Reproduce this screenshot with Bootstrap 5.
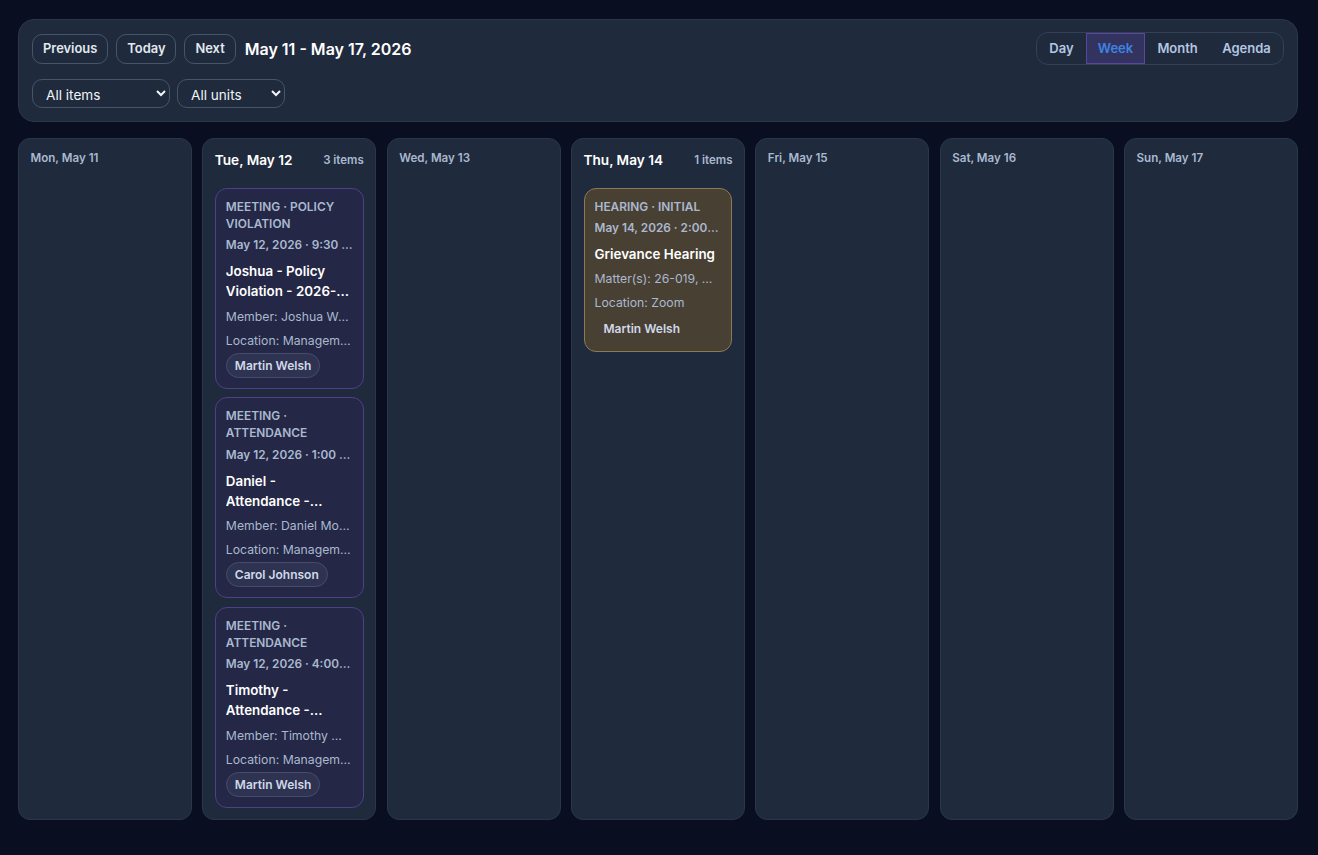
<!DOCTYPE html>
<html lang="en">
<head>
  <meta charset="UTF-8" />
  <meta name="viewport" content="width=device-width, initial-scale=1.0"/>
  <title>Calendar</title>
  <link href="https://cdn.jsdelivr.net/npm/bootstrap@5.3.3/dist/css/bootstrap.min.css" rel="stylesheet" />
  <style>
    html, body { height: 100%; }
    body {
      background: #090f20;
      font-family: Inter, "Liberation Sans", sans-serif;
      color: #e2e8f0;
    }
    .cal-page { padding: 19px 20px 35px 18px; height: 855px; }
    .cal-toolbar {
      background: #1f2a3d;
      border: 1px solid #2a3649;
      border-radius: 16px;
      padding: 12px 13px;
      height: 103px;
      margin-bottom: 16px;
    }
    .cal-btn {
      background: transparent;
      border: 1px solid #475569;
      border-radius: 10px;
      color: #e2e8f0;
      font-size: 12.9px;
      font-weight: 600;
      height: 30px;
      padding: 0 10px;
      line-height: 28px;
    }
    .cal-range { font-size: 16px; font-weight: 600; color: #fff; margin-left: 1px; line-height: 30px; }
    .cal-views {
      border: 1px solid #334155;
      border-radius: 12px;
      height: 33px;
      font-size: 13px;
      font-weight: 600;
      color: #b4c6e0;
    }
    .cal-view { padding: 0 12.2px; line-height: 31px; }
    .cal-view-on {
      background: #33335f;
      border: 1px solid #5b45a0;
      color: #3f83e0;
      padding: 0 11px;
      line-height: 29px;
      height: 31px;
    }
    .cal-filters { margin-top: 14px; gap: 7px; }
    .cal-select {
      background-color: #1f2a3d;
      border: 1px solid #475569;
      border-radius: 10px;
      color: #f1f5f9;
      font-family: Inter, sans-serif;
      font-size: 13.6px;
      height: 29px;
      padding: 2px 9px 0;
    }
    .cal-select-items { width: 138px; }
    .cal-select-units { width: 108px; }
    .cal-week { display: grid; grid-template-columns: repeat(7, 1fr); gap: 10.4px; height: 682px; }
    .cal-day {
      background: #1f2a3d;
      border: 1px solid #2a3649;
      border-radius: 12px;
      padding: 11px 11.5px;
      overflow: hidden;
    }
    .cal-day-empty { font-size: 11.6px; font-weight: 600; color: #a9b9cf; line-height: 16px; }
    .cal-day-head { height: 38px; }
    .cal-day-name { font-size: 13.6px; font-weight: 600; color: #fff; line-height: 20px; }
    .cal-day-count { font-size: 11.5px; font-weight: 600; color: #a9b9cf; line-height: 20px; }
    .cal-item {
      border: 1px solid #50408a;
      border-radius: 12px;
      background: #242745;
      padding: 10px;
      margin-bottom: 8.8px;
      height: 200.7px;
    }
    .cal-item-hearing { background: #494034; border-color: #8a7a55; height: 164px; }
    .cal-kind { font-size: 11.9px; font-weight: 600; color: #a9b9cf; line-height: 16.7px; text-transform: uppercase; }
    .cal-when { font-size: 11.8px; font-weight: 600; color: #a9b9cf; line-height: 17px; margin-top: 5px; white-space: nowrap; overflow: hidden; text-overflow: ellipsis; }
    .cal-title { font-size: 13.38px; font-weight: 600; color: #fff; line-height: 20px; margin-top: 6.7px; }
    .cal-title-clip { display: -webkit-box; -webkit-line-clamp: 2; -webkit-box-orient: vertical; overflow: hidden; }
    .cal-meta { font-size: 12.25px; color: #a9b9cf; line-height: 17px; margin-top: 7px; white-space: nowrap; overflow: hidden; text-overflow: ellipsis; }
    .cal-title + .cal-meta { margin-top: 6.5px; }
    .cal-item-hearing .cal-when { margin-top: 4.2px; }
    .cal-item-hearing .cal-title { margin-top: 7.5px; }
    .cal-item-hearing .cal-title + .cal-meta { margin-top: 6px; }
    .cal-person {
      display: block;
      width: fit-content;
      font-size: 12px;
      font-weight: 600;
      color: #cfd9e8;
      line-height: 23px;
      padding: 0 8px;
      border: 1px solid #474c6c;
      border-radius: 13px;
      background: #2f3352;
      margin-top: 4.3px;
    }
    .cal-person-plain { background: transparent; border-color: transparent; }
  </style>
</head>
<body>
  <div class="cal-page">
    <div class="cal-toolbar">
      <div class="d-flex justify-content-between align-items-center">
        <div class="d-flex align-items-center gap-2">
          <button class="cal-btn">Previous</button>
          <button class="cal-btn">Today</button>
          <button class="cal-btn">Next</button>
          <span class="cal-range">May 11 - May 17, 2026</span>
        </div>
        <div class="cal-views d-flex">
          <span class="cal-view">Day</span>
          <span class="cal-view cal-view-on">Week</span>
          <span class="cal-view">Month</span>
          <span class="cal-view">Agenda</span>
        </div>
      </div>
      <div class="d-flex cal-filters">
        <select class="cal-select cal-select-items"><option>All items</option></select>
        <select class="cal-select cal-select-units"><option>All units</option></select>
      </div>
    </div>

    <div class="cal-week">
      <div class="cal-day"><div class="cal-day-empty">Mon, May 11</div></div>

      <div class="cal-day">
        <div class="cal-day-head d-flex justify-content-between align-items-start">
          <span class="cal-day-name">Tue, May 12</span>
          <span class="cal-day-count">3 items</span>
        </div>
        <div class="cal-item">
          <div class="cal-kind">Meeting · Policy Violation</div>
          <div class="cal-when">May 12, 2026 · 9:30 AM</div>
          <div class="cal-title cal-title-clip">Joshua - Policy Violation - 2026-014 Discipline</div>
          <div class="cal-meta">Member: Joshua Walker</div>
          <div class="cal-meta">Location: Management Office</div>
          <span class="cal-person">Martin Welsh</span>
        </div>
        <div class="cal-item">
          <div class="cal-kind">Meeting · Attendance</div>
          <div class="cal-when">May 12, 2026 · 1:00 PM</div>
          <div class="cal-title cal-title-clip">Daniel - Attendance - Attendance Review</div>
          <div class="cal-meta">Member: Daniel Morrison</div>
          <div class="cal-meta">Location: Management Office</div>
          <span class="cal-person">Carol Johnson</span>
        </div>
        <div class="cal-item">
          <div class="cal-kind">Meeting · Attendance</div>
          <div class="cal-when">May 12, 2026 · 4:00 PM</div>
          <div class="cal-title cal-title-clip">Timothy - Attendance - Attendance Review</div>
          <div class="cal-meta">Member: Timothy Whitfield</div>
          <div class="cal-meta">Location: Management Office</div>
          <span class="cal-person">Martin Welsh</span>
        </div>
      </div>

      <div class="cal-day"><div class="cal-day-empty">Wed, May 13</div></div>

      <div class="cal-day">
        <div class="cal-day-head d-flex justify-content-between align-items-start">
          <span class="cal-day-name">Thu, May 14</span>
          <span class="cal-day-count">1 items</span>
        </div>
        <div class="cal-item cal-item-hearing">
          <div class="cal-kind">Hearing · Initial</div>
          <div class="cal-when">May 14, 2026 · 2:00 PM</div>
          <div class="cal-title">Grievance Hearing</div>
          <div class="cal-meta">Matter(s): 26-019, MG-20, MG-21</div>
          <div class="cal-meta">Location: Zoom</div>
          <span class="cal-person cal-person-plain">Martin Welsh</span>
        </div>
      </div>

      <div class="cal-day"><div class="cal-day-empty">Fri, May 15</div></div>
      <div class="cal-day"><div class="cal-day-empty">Sat, May 16</div></div>
      <div class="cal-day"><div class="cal-day-empty">Sun, May 17</div></div>
    </div>
  </div>
  <script src="https://cdn.jsdelivr.net/npm/bootstrap@5.3.3/dist/js/bootstrap.bundle.min.js"></script>
</body>
</html>
